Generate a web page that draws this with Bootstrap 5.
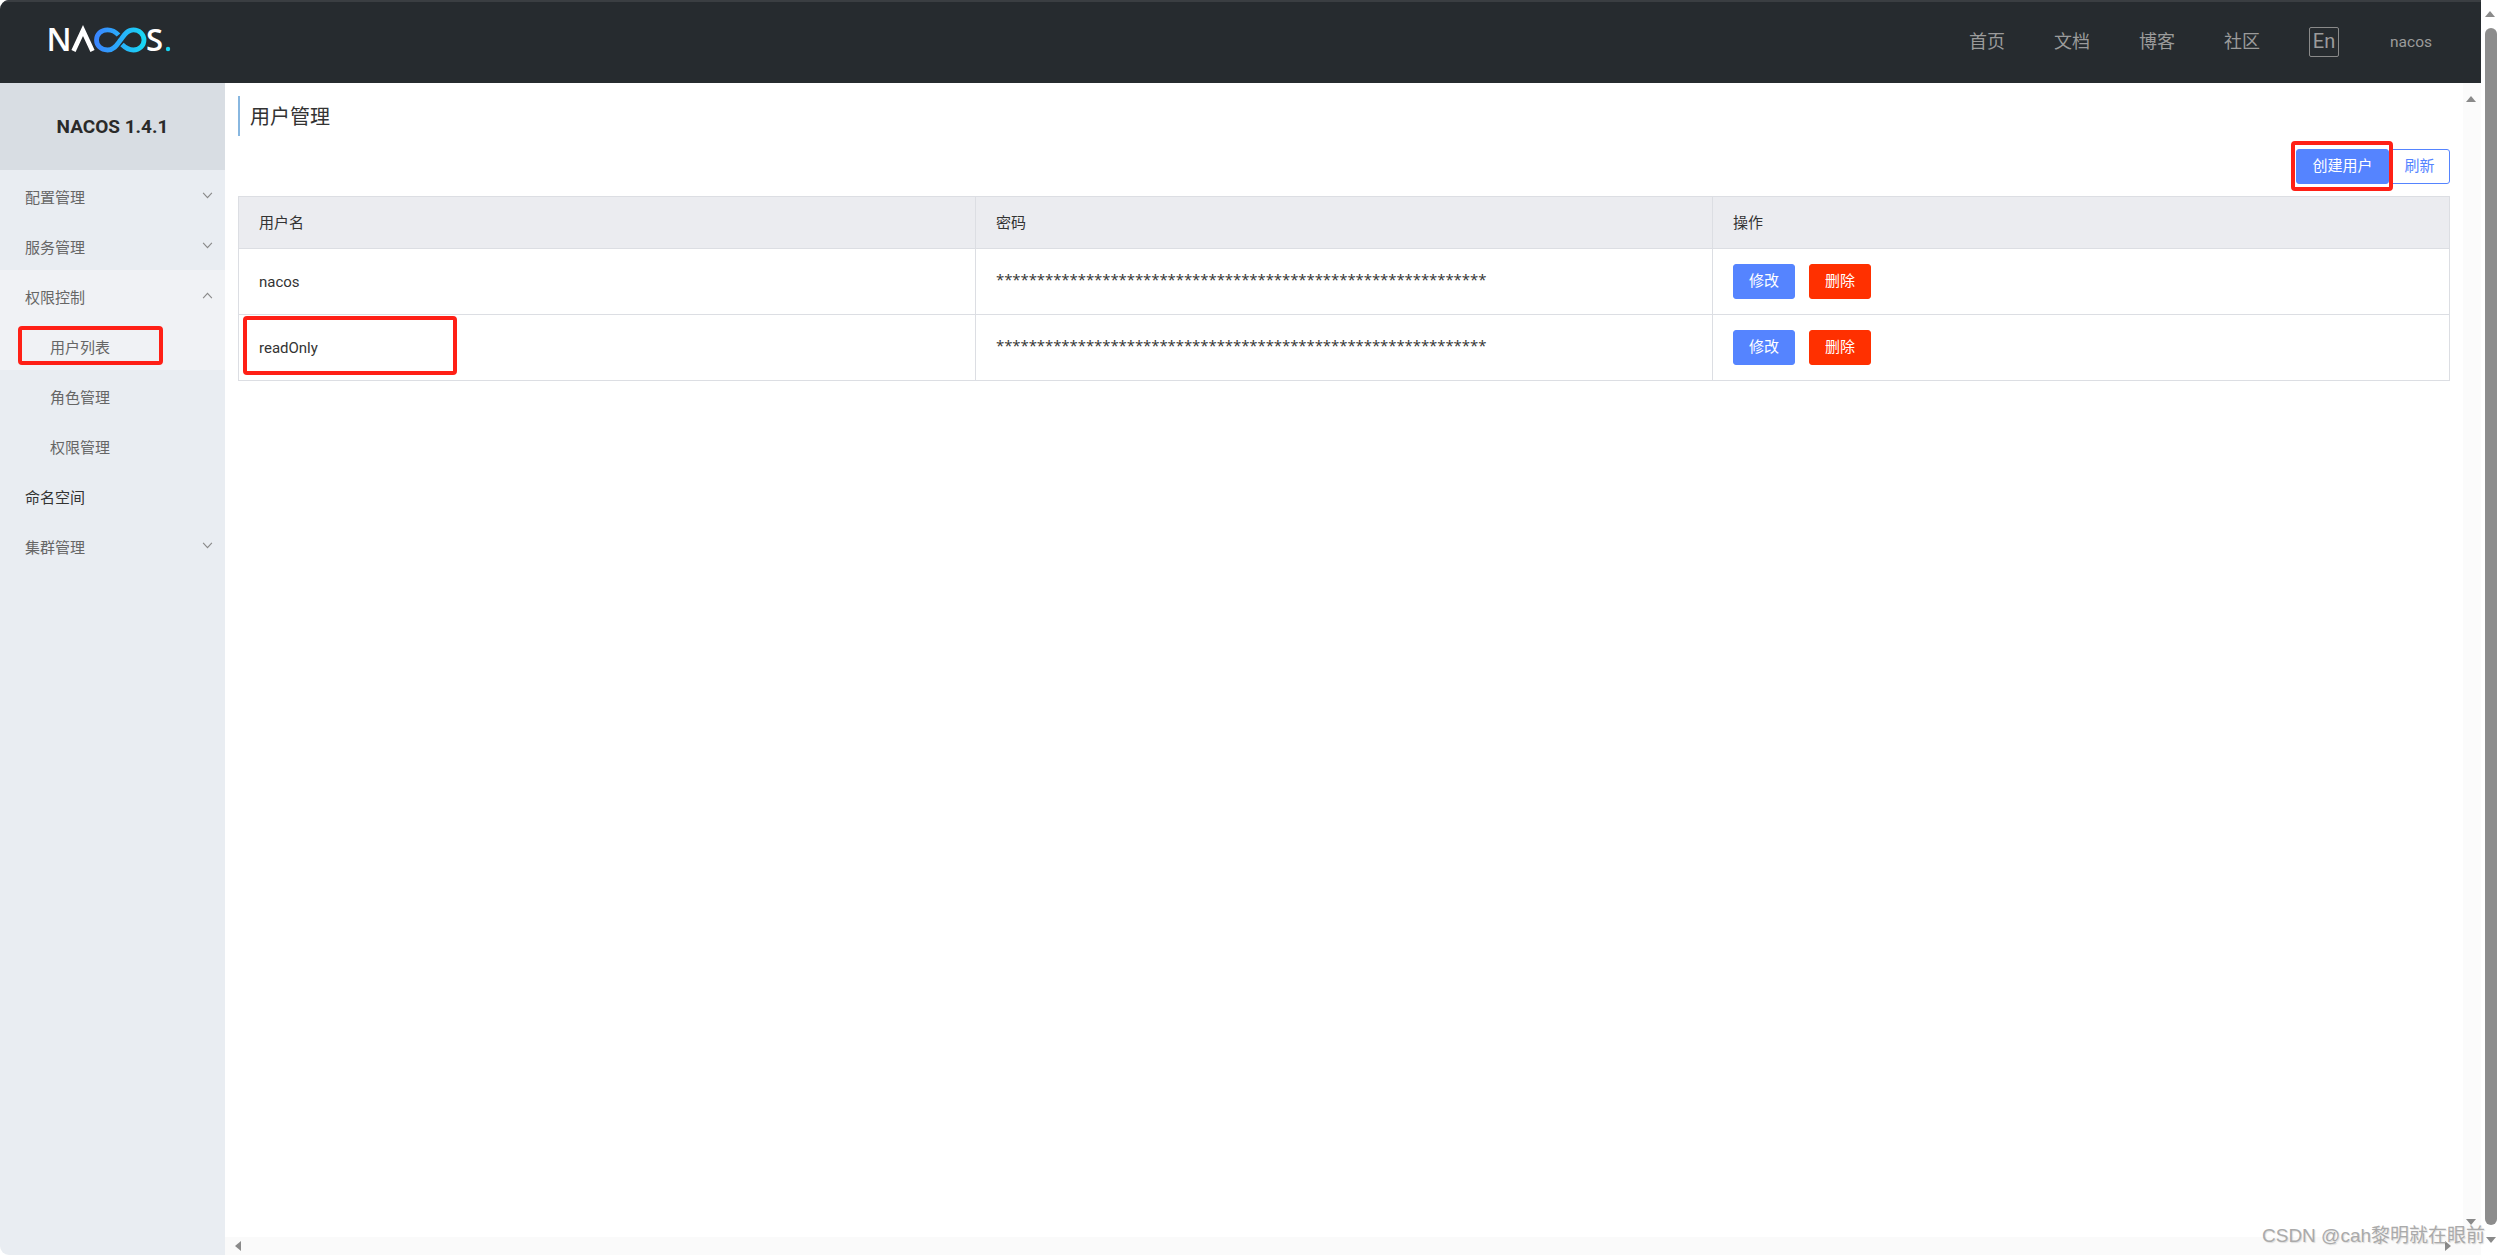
<!DOCTYPE html>
<html lang="zh">
<head>
<meta charset="utf-8">
<title>Nacos</title>
<link href="https://cdn.jsdelivr.net/npm/bootstrap@5.3.0/dist/css/bootstrap.min.css" rel="stylesheet">
<style>
html,body{height:100%;overflow:hidden;background:#fff}
body{font-family:Roboto,"Noto Sans CJK SC",sans-serif;font-size:15px;color:#333}
.app-shell{height:1255px;border-radius:9px;overflow:hidden;position:relative}
.app-col{width:2481px}
.top-bar{height:83px;background:#262b2f;border-top:2px solid #3a3e42;color:#9b9b9b}
.logo-wrap{margin-left:50px;height:41px}
.logo-wrap svg{display:block;overflow:visible}
.top-nav{margin-right:49px;margin-bottom:2px}
.top-link{font-size:18px;line-height:30px;width:36px;white-space:nowrap;margin-right:49px}
.lang-box{width:30px;height:30px;border:1px solid #8a8a8a;border-radius:2px;font-size:20px;line-height:26px;text-align:center;margin-right:51px}
.user-name{font-size:15.500px;line-height:30px}
.side-nav{width:225px;background:#e9edf2;flex:none}
.side-head{height:87px;background:#d8dde3;font-size:19px;font-weight:700;color:#2a2a2a;line-height:87px;text-align:center}
.side-row{height:50px;line-height:56px;padding-left:25px;padding-right:12px;color:#666;font-size:15px;position:relative}
.side-row.sub{padding-left:50px}
.side-row.open{background:#f0f2f5}
.side-row.dark{color:#333}
.chev{position:absolute;right:12px;top:22px}
.content-pane{min-width:0}
.title-mark{margin:13px 0 0 13px;height:40px;border-left:2px solid #88b7e0;padding-left:10px;font-size:20px;line-height:42px;color:#333}
.tool-row{margin:13px 13px 12px 0;height:35px}
.act-btn{height:35px;width:62px;padding:0;font-size:15px;line-height:33px;border-radius:3px;border:1px solid #5584ff;background:#5584ff;color:#fff}
.act-btn.wide{width:93px}
.act-btn.ghost{background:#fff;color:#5584ff;width:61px}
.act-btn.danger{background:#ff3000;border-color:#ff3000;margin-left:14px}
.user-table{margin:0 0 0 13px;width:2212px;table-layout:fixed;border-collapse:collapse;color:#333}
.user-table th,.user-table td{border:1px solid #dcdee3;padding:1px 20px 0;vertical-align:middle;font-size:15px;font-weight:400;box-shadow:none;background:transparent}
.user-table th{height:52px;background:#ebecf0}
.user-table td{height:66px}
.user-table td.stars{font-family:"Open Sans",sans-serif;letter-spacing:-.09px;padding-top:0;padding-bottom:4px;white-space:nowrap}
.user-table td.ops{padding-top:0}
.v-bar{width:18px;background:#fbfbfb;flex:none;position:relative}
.h-bar{height:18px;background:#fafafa;position:relative}
.outer-bar{width:19px;background:#fff;flex:none;position:relative}
.thumb{position:absolute;left:4px;right:3px;top:28px;bottom:30px;background:#8d8d8d;border-radius:6px}
.tri{position:absolute;width:0;height:0;border:5px solid transparent}
.tri.up{border-top:0;border-bottom:6px solid #8a8a8a}
.tri.down{border-bottom:0;border-top:6px solid #8a8a8a}
.tri.left{border-left:0;border-right:6px solid #8a8a8a}
.tri.right{border-right:0;border-left:6px solid #8a8a8a}
.mark-box{position:absolute;border:4px solid #ff2016;border-radius:4px;pointer-events:none}
.mark-a{left:18px;top:326px;width:145px;height:39px}
.mark-b{left:243px;top:316px;width:214px;height:59px}
.mark-c{left:2291px;top:141px;width:102px;height:50px}
.water{position:absolute;left:2262px;top:1224px;font-family:"Liberation Sans","Noto Sans CJK SC",sans-serif;font-size:19px;line-height:24px;color:#aaa;white-space:nowrap;text-shadow:1px 1px 1px rgba(0,0,0,.12)}
</style>
</head>
<body>
<div class="app-shell d-flex">
  <div class="app-col d-flex flex-column">
    <header class="top-bar d-flex align-items-center justify-content-between">
      <div class="logo-wrap">
        <svg width="122" height="41" viewBox="0 0 122 41" aria-label="NACOS">
          <defs><linearGradient id="lg" x1="0" x2="1" y1="0" y2="0"><stop offset="0" stop-color="#3a86ff"/><stop offset="1" stop-color="#18d6f5"/></linearGradient></defs>
          <text x="-3.500" y="29" font-family="Open Sans" font-weight="600" font-size="32" fill="#fff">N</text>
          <path d="M23.500 29 L33 8.500 L42.500 29" fill="none" stroke="#fff" stroke-width="4.600"/>
          <path d="M69 13 C65 8.500 61 7.800 58 7.800 C51.500 7.800 47 12.500 47 18 C47 23.500 51.500 28 58 28 C65 28 68 22 71 18 C74 14 77 7.800 84 7.800 C90 7.800 94.500 12.500 94.500 18 C94.500 23.500 90 28 84 28 C80 28 76 26 72.500 22.500" fill="none" stroke="url(#lg)" stroke-width="4.800" transform="translate(-.5 0)"/>
          <text x="96" y="29" font-family="Open Sans" font-weight="600" font-size="31" fill="#fff">S</text>
          <circle cx="118" cy="27" r="2.200" fill="#18d6f5"/>
        </svg>
      </div>
      <nav class="top-nav d-flex align-items-center">
        <span class="top-link">首页</span>
        <span class="top-link">文档</span>
        <span class="top-link">博客</span>
        <span class="top-link">社区</span>
        <span class="lang-box">En</span>
        <span class="user-name">nacos</span>
      </nav>
    </header>
    <div class="d-flex flex-grow-1" style="min-height:0">
      <aside class="side-nav">
        <div class="side-head">NACOS 1.4.1</div>
        <div class="side-row">配置管理<svg class="chev" width="11" height="7" viewBox="0 0 12 8"><path d="M1 1l5 5.500L11 1" fill="none" stroke="#8a8a8a" stroke-width="1.300"/></svg></div>
        <div class="side-row">服务管理<svg class="chev" width="11" height="7" viewBox="0 0 12 8"><path d="M1 1l5 5.500L11 1" fill="none" stroke="#8a8a8a" stroke-width="1.300"/></svg></div>
        <div class="side-row open">权限控制<svg class="chev" width="11" height="7" viewBox="0 0 12 8"><path d="M1 7l5-5.500L11 7" fill="none" stroke="#8a8a8a" stroke-width="1.300"/></svg></div>
        <div class="side-row sub open">用户列表</div>
        <div class="side-row sub">角色管理</div>
        <div class="side-row sub">权限管理</div>
        <div class="side-row dark">命名空间</div>
        <div class="side-row">集群管理<svg class="chev" width="11" height="7" viewBox="0 0 12 8"><path d="M1 1l5 5.500L11 1" fill="none" stroke="#8a8a8a" stroke-width="1.300"/></svg></div>
      </aside>
      <div class="content-pane d-flex flex-column flex-grow-1">
        <div class="d-flex flex-grow-1" style="min-height:0">
          <main class="flex-grow-1">
            <div class="title-mark">用户管理</div>
            <div class="tool-row d-flex justify-content-end">
              <button class="btn act-btn wide">创建用户</button>
              <button class="btn act-btn ghost">刷新</button>
            </div>
            <table class="table user-table">
              <thead><tr><th>用户名</th><th>密码</th><th>操作</th></tr></thead>
              <tbody>
                <tr><td>nacos</td><td class="stars">************************************************************</td><td class="ops"><button class="btn act-btn">修改</button><button class="btn act-btn danger">删除</button></td></tr>
                <tr><td>readOnly</td><td class="stars">************************************************************</td><td class="ops"><button class="btn act-btn">修改</button><button class="btn act-btn danger">删除</button></td></tr>
              </tbody>
            </table>
          </main>
          <div class="v-bar"><span class="tri up" style="left:3px;top:13px"></span><span class="tri down" style="left:3px;top:1136px"></span></div>
        </div>
        <div class="h-bar"><span class="tri left" style="left:10px;top:4px"></span><span class="tri right" style="left:2220px;top:4px"></span></div>
      </div>
    </div>
  </div>
  <div class="outer-bar"><span class="tri up" style="left:4px;top:11px"></span><span class="thumb"></span><span class="tri down" style="left:5px;top:1237px"></span></div>
  <div class="mark-box mark-a"></div>
  <div class="mark-box mark-b"></div>
  <div class="mark-box mark-c"></div>
  <div class="water">CSDN @cah黎明就在眼前</div>
</div>
<script src="https://cdn.jsdelivr.net/npm/bootstrap@5.3.0/dist/js/bootstrap.bundle.min.js"></script>
</body>
</html>
